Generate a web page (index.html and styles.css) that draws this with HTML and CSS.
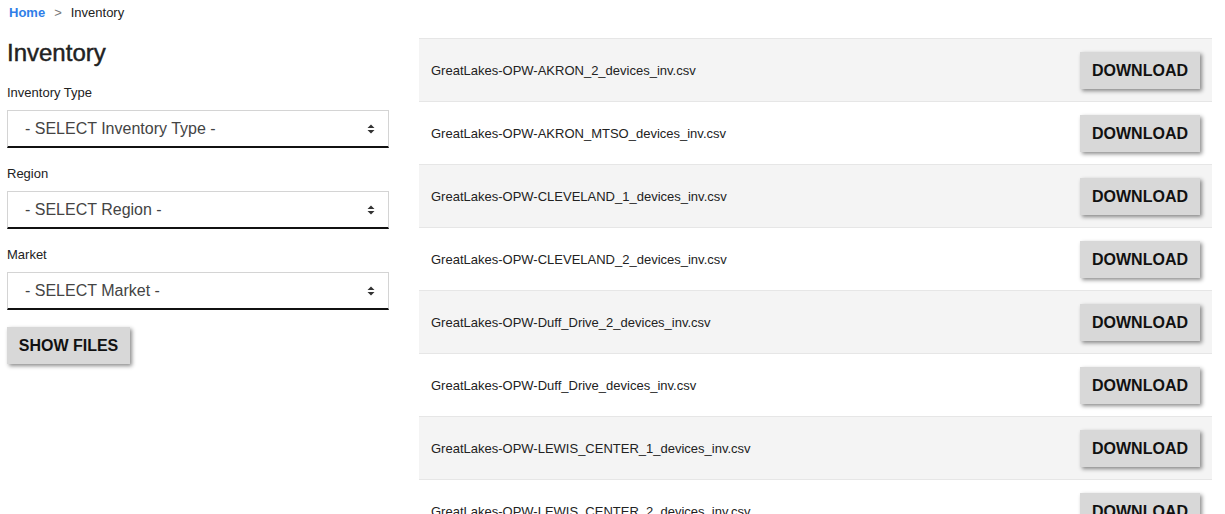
FILE: index.html
```html
<!DOCTYPE html>
<html>
<head>
<meta charset="utf-8">
<link rel="stylesheet" href="styles.css">
</head>
<body>
<nav class="crumbs"><a class="crumb-home" href="#">Home</a><span class="crumb-sep">&gt;</span><span class="crumb-cur">Inventory</span></nav>
<div class="main">
  <aside class="filters">
    <h1 class="title">Inventory</h1>
    <div class="field">
      <label class="label">Inventory Type</label>
      <div class="select"><span class="select-text">- SELECT Inventory Type -</span><svg class="arrows" width="8" height="10" viewBox="0 0 8 10"><path d="M4 0.5 L7.5 4 L0.5 4 Z M4 9.5 L7.5 6 L0.5 6 Z" fill="#333"/></svg></div>
    </div>
    <div class="field">
      <label class="label">Region</label>
      <div class="select"><span class="select-text">- SELECT Region -</span><svg class="arrows" width="8" height="10" viewBox="0 0 8 10"><path d="M4 0.5 L7.5 4 L0.5 4 Z M4 9.5 L7.5 6 L0.5 6 Z" fill="#333"/></svg></div>
    </div>
    <div class="field">
      <label class="label">Market</label>
      <div class="select"><span class="select-text">- SELECT Market -</span><svg class="arrows" width="8" height="10" viewBox="0 0 8 10"><path d="M4 0.5 L7.5 4 L0.5 4 Z M4 9.5 L7.5 6 L0.5 6 Z" fill="#333"/></svg></div>
    </div>
    <button class="btn btn-show">SHOW FILES</button>
  </aside>
  <section class="files">
    <div class="row odd"><span class="fname">GreatLakes-OPW-AKRON_2_devices_inv.csv</span><button class="btn">DOWNLOAD</button></div>
    <div class="row"><span class="fname">GreatLakes-OPW-AKRON_MTSO_devices_inv.csv</span><button class="btn">DOWNLOAD</button></div>
    <div class="row odd"><span class="fname">GreatLakes-OPW-CLEVELAND_1_devices_inv.csv</span><button class="btn">DOWNLOAD</button></div>
    <div class="row"><span class="fname">GreatLakes-OPW-CLEVELAND_2_devices_inv.csv</span><button class="btn">DOWNLOAD</button></div>
    <div class="row odd"><span class="fname">GreatLakes-OPW-Duff_Drive_2_devices_inv.csv</span><button class="btn">DOWNLOAD</button></div>
    <div class="row"><span class="fname">GreatLakes-OPW-Duff_Drive_devices_inv.csv</span><button class="btn">DOWNLOAD</button></div>
    <div class="row odd"><span class="fname">GreatLakes-OPW-LEWIS_CENTER_1_devices_inv.csv</span><button class="btn">DOWNLOAD</button></div>
    <div class="row"><span class="fname">GreatLakes-OPW-LEWIS_CENTER_2_devices_inv.csv</span><button class="btn">DOWNLOAD</button></div>
  </section>
</div>
</body>
</html>
```

FILE: styles.css
```css
html, body {
  margin: 0;
  padding: 0;
  background: #fff;
  overflow: hidden;
}
body {
  font-family: "Liberation Sans", Arial, sans-serif;
  color: #222;
}
.crumbs {
  font-size: 13px;
  line-height: 15px;
  padding: 5px 9px 0;
  height: 38px;
  box-sizing: border-box;
}
.crumb-home {
  color: #2f7ee8;
  font-weight: bold;
  text-decoration: none;
}
.crumb-sep {
  color: #777;
  margin: 0 9px;
}
.crumb-cur {
  color: #222;
}
.main {
  display: grid;
  grid-template-columns: 382px 793px;
  column-gap: 30px;
  padding-left: 7px;
}
.filters {
  display: flex;
  flex-direction: column;
}
.title {
  font-size: 24px;
  font-weight: normal;
  -webkit-text-stroke: 0.45px #222;
  margin: 0;
  line-height: 28px;
  padding-top: 1px;
  color: #222;
}
.field {
  display: flex;
  flex-direction: column;
}
.label {
  font-size: 13px;
  line-height: 15px;
  margin-top: 18px;
  margin-bottom: 10px;
}
.select {
  height: 38px;
  box-sizing: border-box;
  border: 1px solid #d4d4d4;
  border-bottom: 2px solid #111;
  display: flex;
  align-items: center;
  justify-content: space-between;
  padding: 1px 13px 0 17px;
}
.select-text {
  font-size: 16px;
  color: #444;
}
.arrows {
  display: block;
}
.btn {
  font-family: "Liberation Sans", Arial, sans-serif;
  font-weight: bold;
  font-size: 16px;
  color: #111;
  background: #d8d8d8;
  border: 0;
  box-shadow: 2px 2px 4px rgba(0,0,0,0.45);
  height: 37px;
  padding: 0;
  white-space: nowrap;
}
.btn-show {
  align-self: flex-start;
  margin-top: 17px;
  width: 123px;
}
.files {
  display: flex;
  flex-direction: column;
}
.row {
  height: 63px;
  box-sizing: border-box;
  border-top: 1px solid #e6e6e6;
  display: flex;
  align-items: center;
  justify-content: space-between;
  padding: 0 12px 0 12px;
  background: #fff;
}
.row.odd {
  background: #f4f4f4;
}
.fname {
  font-size: 13px;
  color: #222;
}
.row .btn {
  width: 120px;
  margin-top: 1px;
}
```
